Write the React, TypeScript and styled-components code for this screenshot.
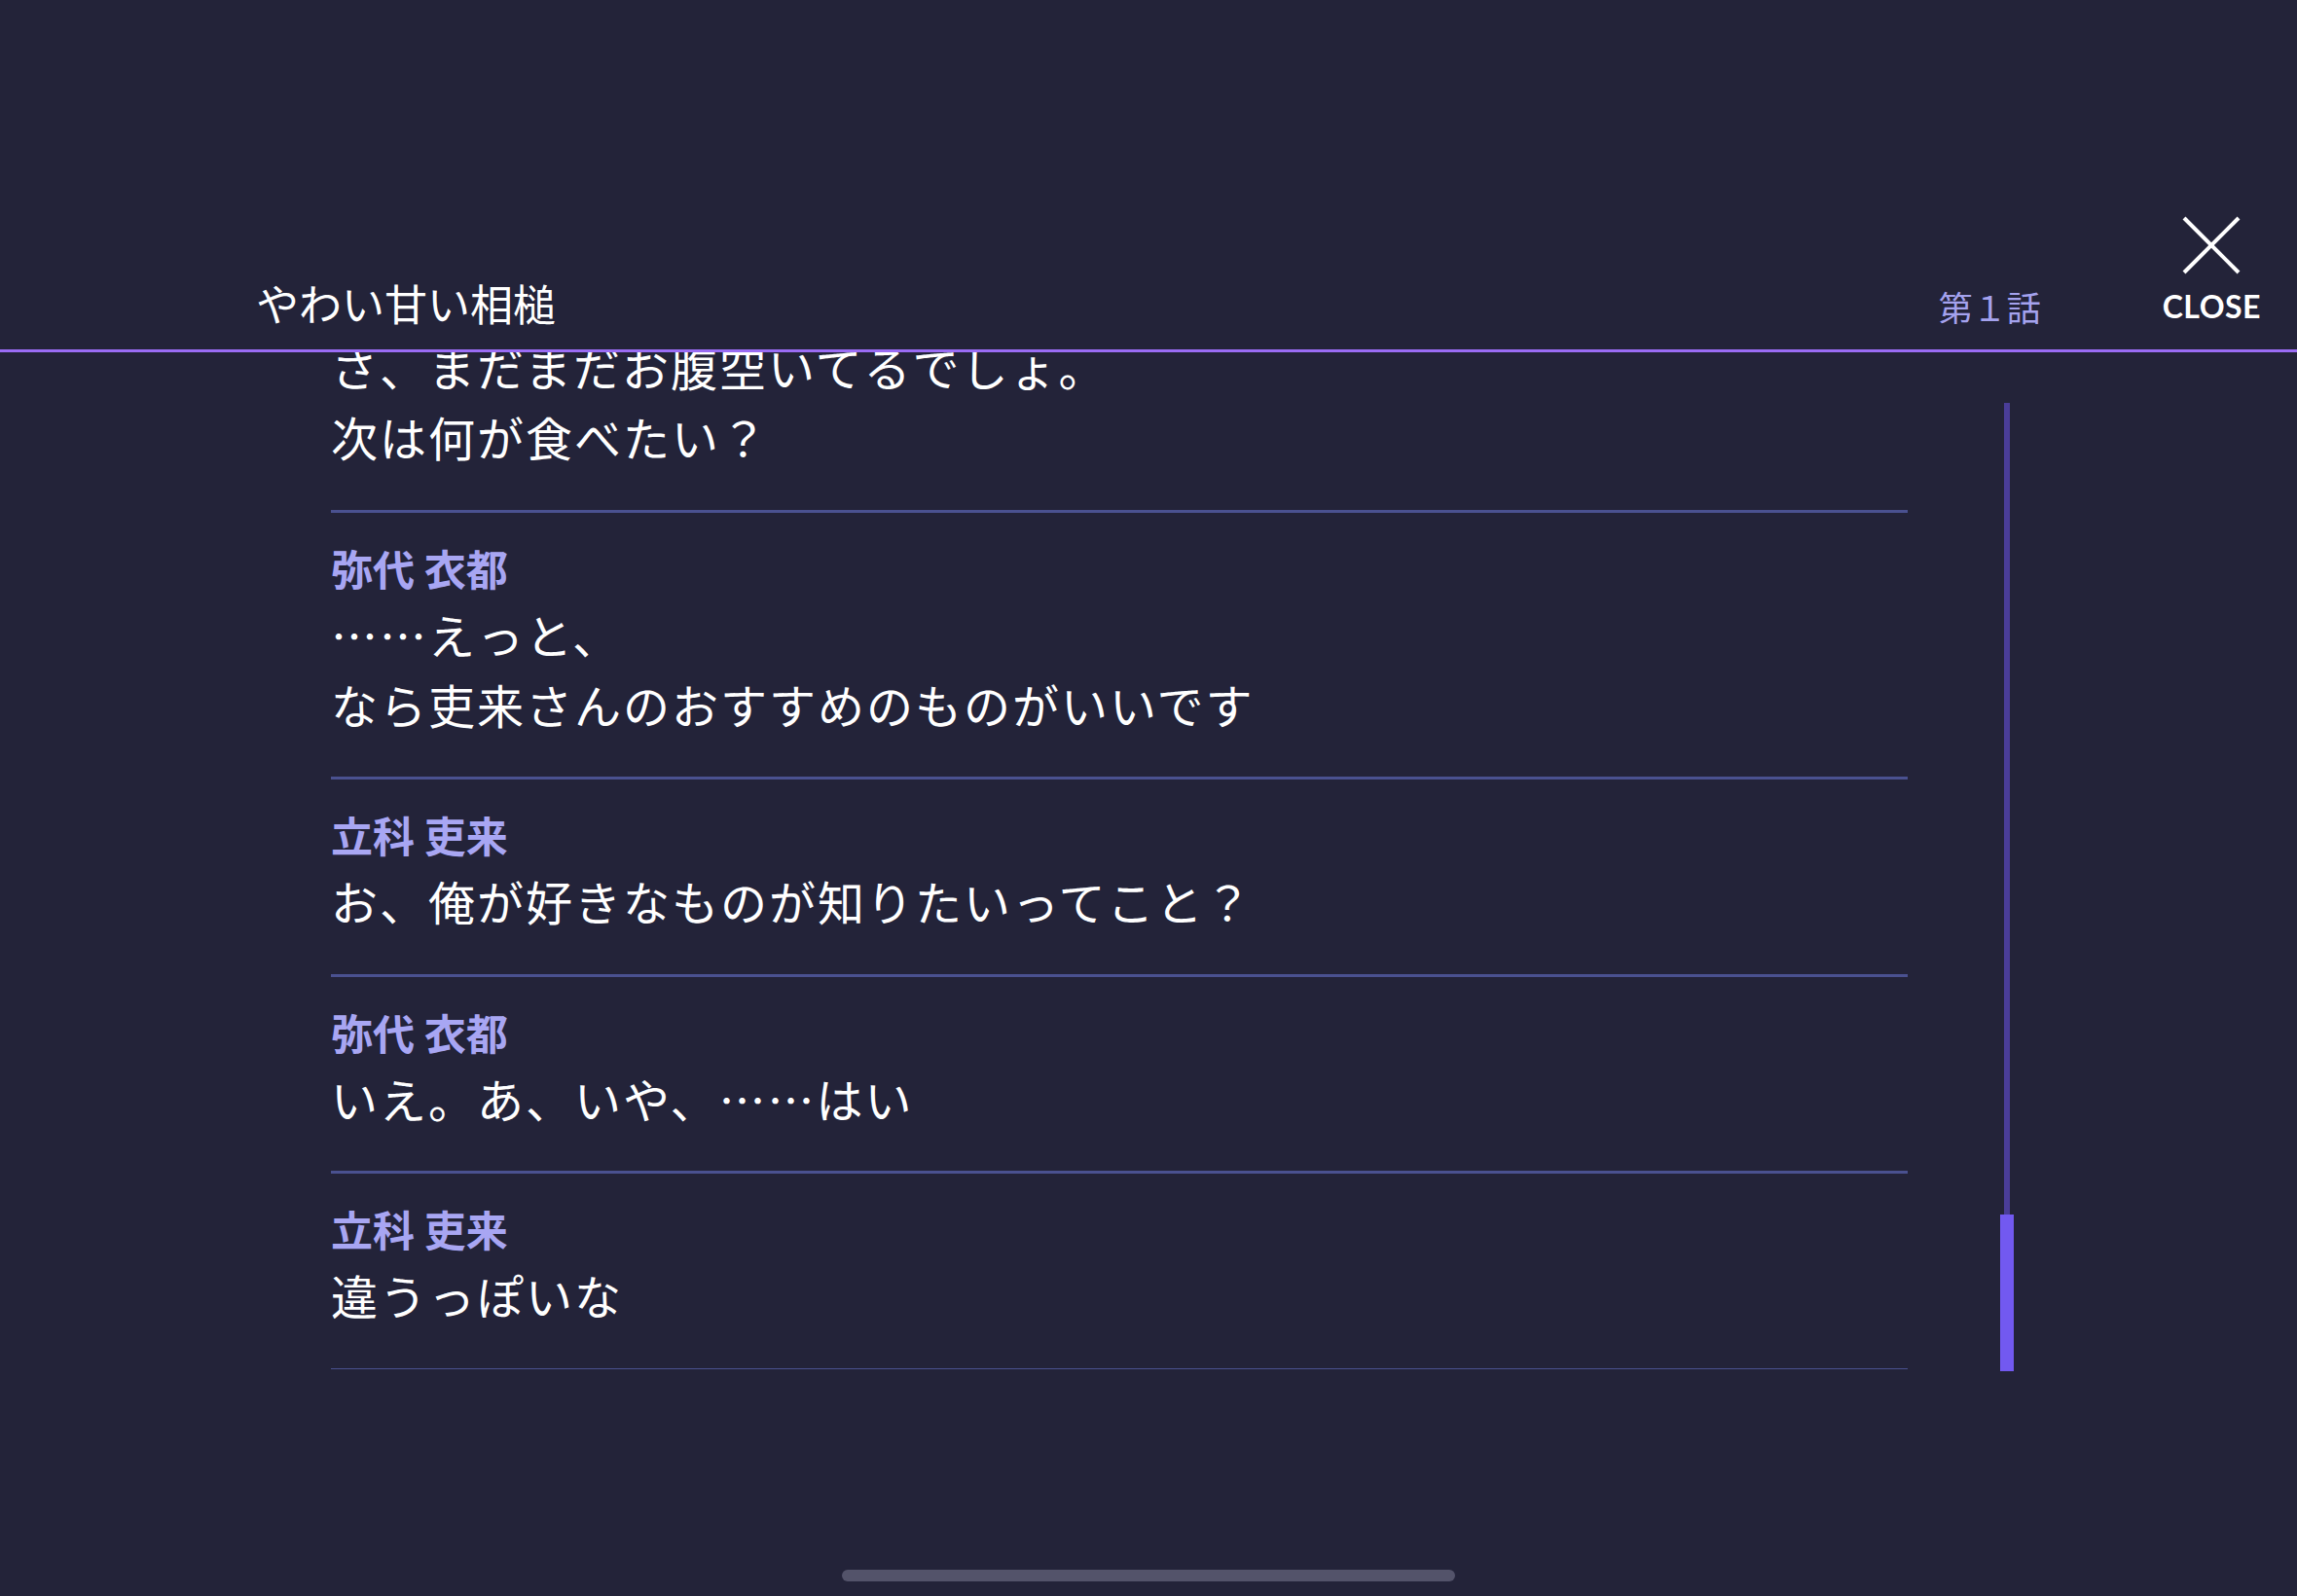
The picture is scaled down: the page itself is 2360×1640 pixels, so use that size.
import * as React from 'react';
import styled, { createGlobalStyle } from 'styled-components';

const GlobalStyle = createGlobalStyle`
  html, body {
    margin: 0;
    padding: 0;
    background: #232339;
  }

  * {
    box-sizing: border-box;
  }
`;

const Page = styled.div`
  display: flex;
  flex-direction: column;
  width: 2360px;
  height: 1640px;
  overflow: hidden;
  background: #232339;
  color: #fff;
  font-family: 'Noto Sans CJK JP', 'Noto Sans', sans-serif;
`;

const Header = styled.header`
  display: flex;
  align-items: flex-end;
  height: 362px;
  padding: 0 37px 0 263px;
  border-bottom: 3px solid #9a6cf4;
`;

const Title = styled.h1`
  flex: 1;
  margin: 0 0 26px;
  font-size: 44px;
  font-weight: 400;
  line-height: 1;
  color: #fff;
`;

const Episode = styled.div`
  margin: 0 125px 27px 0;
  font-size: 35px;
  line-height: 1;
  color: #a4a2ee;
`;

const CloseButton = styled.button`
  display: flex;
  flex-direction: column;
  align-items: center;
  gap: 17px;
  margin: 0 0 28px;
  padding: 0;
  border: 0;
  background: transparent;
  color: #fff;
  cursor: pointer;
  font-family: Lato, 'Liberation Sans', sans-serif;
  font-size: 32px;
  font-weight: 700;
  line-height: 1;
  letter-spacing: 0.5px;

  svg {
    display: block;
    width: 60px;
    height: 60px;
  }
`;

const Body = styled.main`
  display: flex;
  align-items: flex-start;
  height: 1045px;
  padding-left: 340px;
`;

const Viewport = styled.div`
  width: 1620px;
  height: 100%;
  overflow-y: auto;
  scrollbar-width: none;

  &::-webkit-scrollbar {
    display: none;
  }
`;

const List = styled.ul`
  margin: 0;
  padding: 0;
  list-style: none;
  border-bottom: 1px solid #4a5190;
`;

const Entry = styled.li`
  padding: 24px 0 39.5px;
  border-top: 3px solid #4a5190;
`;

const Speaker = styled.div`
  font-size: 43px;
  font-weight: 700;
  line-height: 64px;
  color: #a8a6f3;
`;

const Line = styled.p`
  margin: 0;
  font-size: 48px;
  font-weight: 400;
  line-height: 72px;
  letter-spacing: 2px;
  color: #fff;
  white-space: nowrap;
`;

const Scrollbar = styled.div`
  position: relative;
  display: flex;
  justify-content: center;
  width: 14px;
  height: 995px;
  margin: 52px 0 0 95px;
`;

const Track = styled.div`
  width: 6px;
  height: 100%;
  background: #4a3d98;
`;

const Thumb = styled.div<{ $size: number }>`
  position: absolute;
  right: 0;
  bottom: 0;
  left: 0;
  height: ${p => p.$size}px;
  background: #7259f0;
`;

const Footer = styled.footer`
  display: flex;
  flex: 1;
  align-items: flex-end;
  justify-content: center;
  padding-bottom: 15px;
`;

const HomeBar = styled.div`
  width: 630px;
  height: 12px;
  border-radius: 6px;
  background: #53536a;
`;

type Message = {
  id: number;
  speaker: string;
  lines: string[];
};

const messages: Message[] = [
  {
    id: 1,
    speaker: '立科 吏来',
    lines: ['さ、まだまだお腹空いてるでしょ。', '次は何が食べたい？'],
  },
  {
    id: 2,
    speaker: '弥代 衣都',
    lines: ['……えっと、', 'なら吏来さんのおすすめのものがいいです'],
  },
  {
    id: 3,
    speaker: '立科 吏来',
    lines: ['お、俺が好きなものが知りたいってこと？'],
  },
  {
    id: 4,
    speaker: '弥代 衣都',
    lines: ['いえ。あ、いや、……はい'],
  },
  {
    id: 5,
    speaker: '立科 吏来',
    lines: ['違うっぽいな'],
  },
];

const CloseIcon: React.FC = () => (
  <svg viewBox="0 0 60 60" fill="none" stroke="currentColor" strokeWidth="4">
    <line x1="2" y1="2" x2="58" y2="58" />
    <line x1="58" y1="2" x2="2" y2="58" />
  </svg>
);

export default function App() {
  const viewportRef = React.useRef<HTMLDivElement>(null);

  React.useLayoutEffect(() => {
    const el = viewportRef.current;
    if (el) {
      el.scrollTop = el.scrollHeight;
    }
  }, []);

  return (
    <>
      <GlobalStyle />
      <Page>
        <Header>
          <Title>やわい甘い相槌</Title>
          <Episode>第１話</Episode>
          <CloseButton type="button" aria-label="Close">
            <CloseIcon />
            CLOSE
          </CloseButton>
        </Header>

        <Body>
          <Viewport ref={viewportRef}>
            <List>
              {messages.map(message => (
                <Entry key={message.id}>
                  <Speaker>{message.speaker}</Speaker>
                  {message.lines.map(line => (
                    <Line key={line}>{line}</Line>
                  ))}
                </Entry>
              ))}
            </List>
          </Viewport>
          <Scrollbar>
            <Track />
            <Thumb $size={161} />
          </Scrollbar>
        </Body>

        <Footer>
          <HomeBar />
        </Footer>
      </Page>
    </>
  );
}
